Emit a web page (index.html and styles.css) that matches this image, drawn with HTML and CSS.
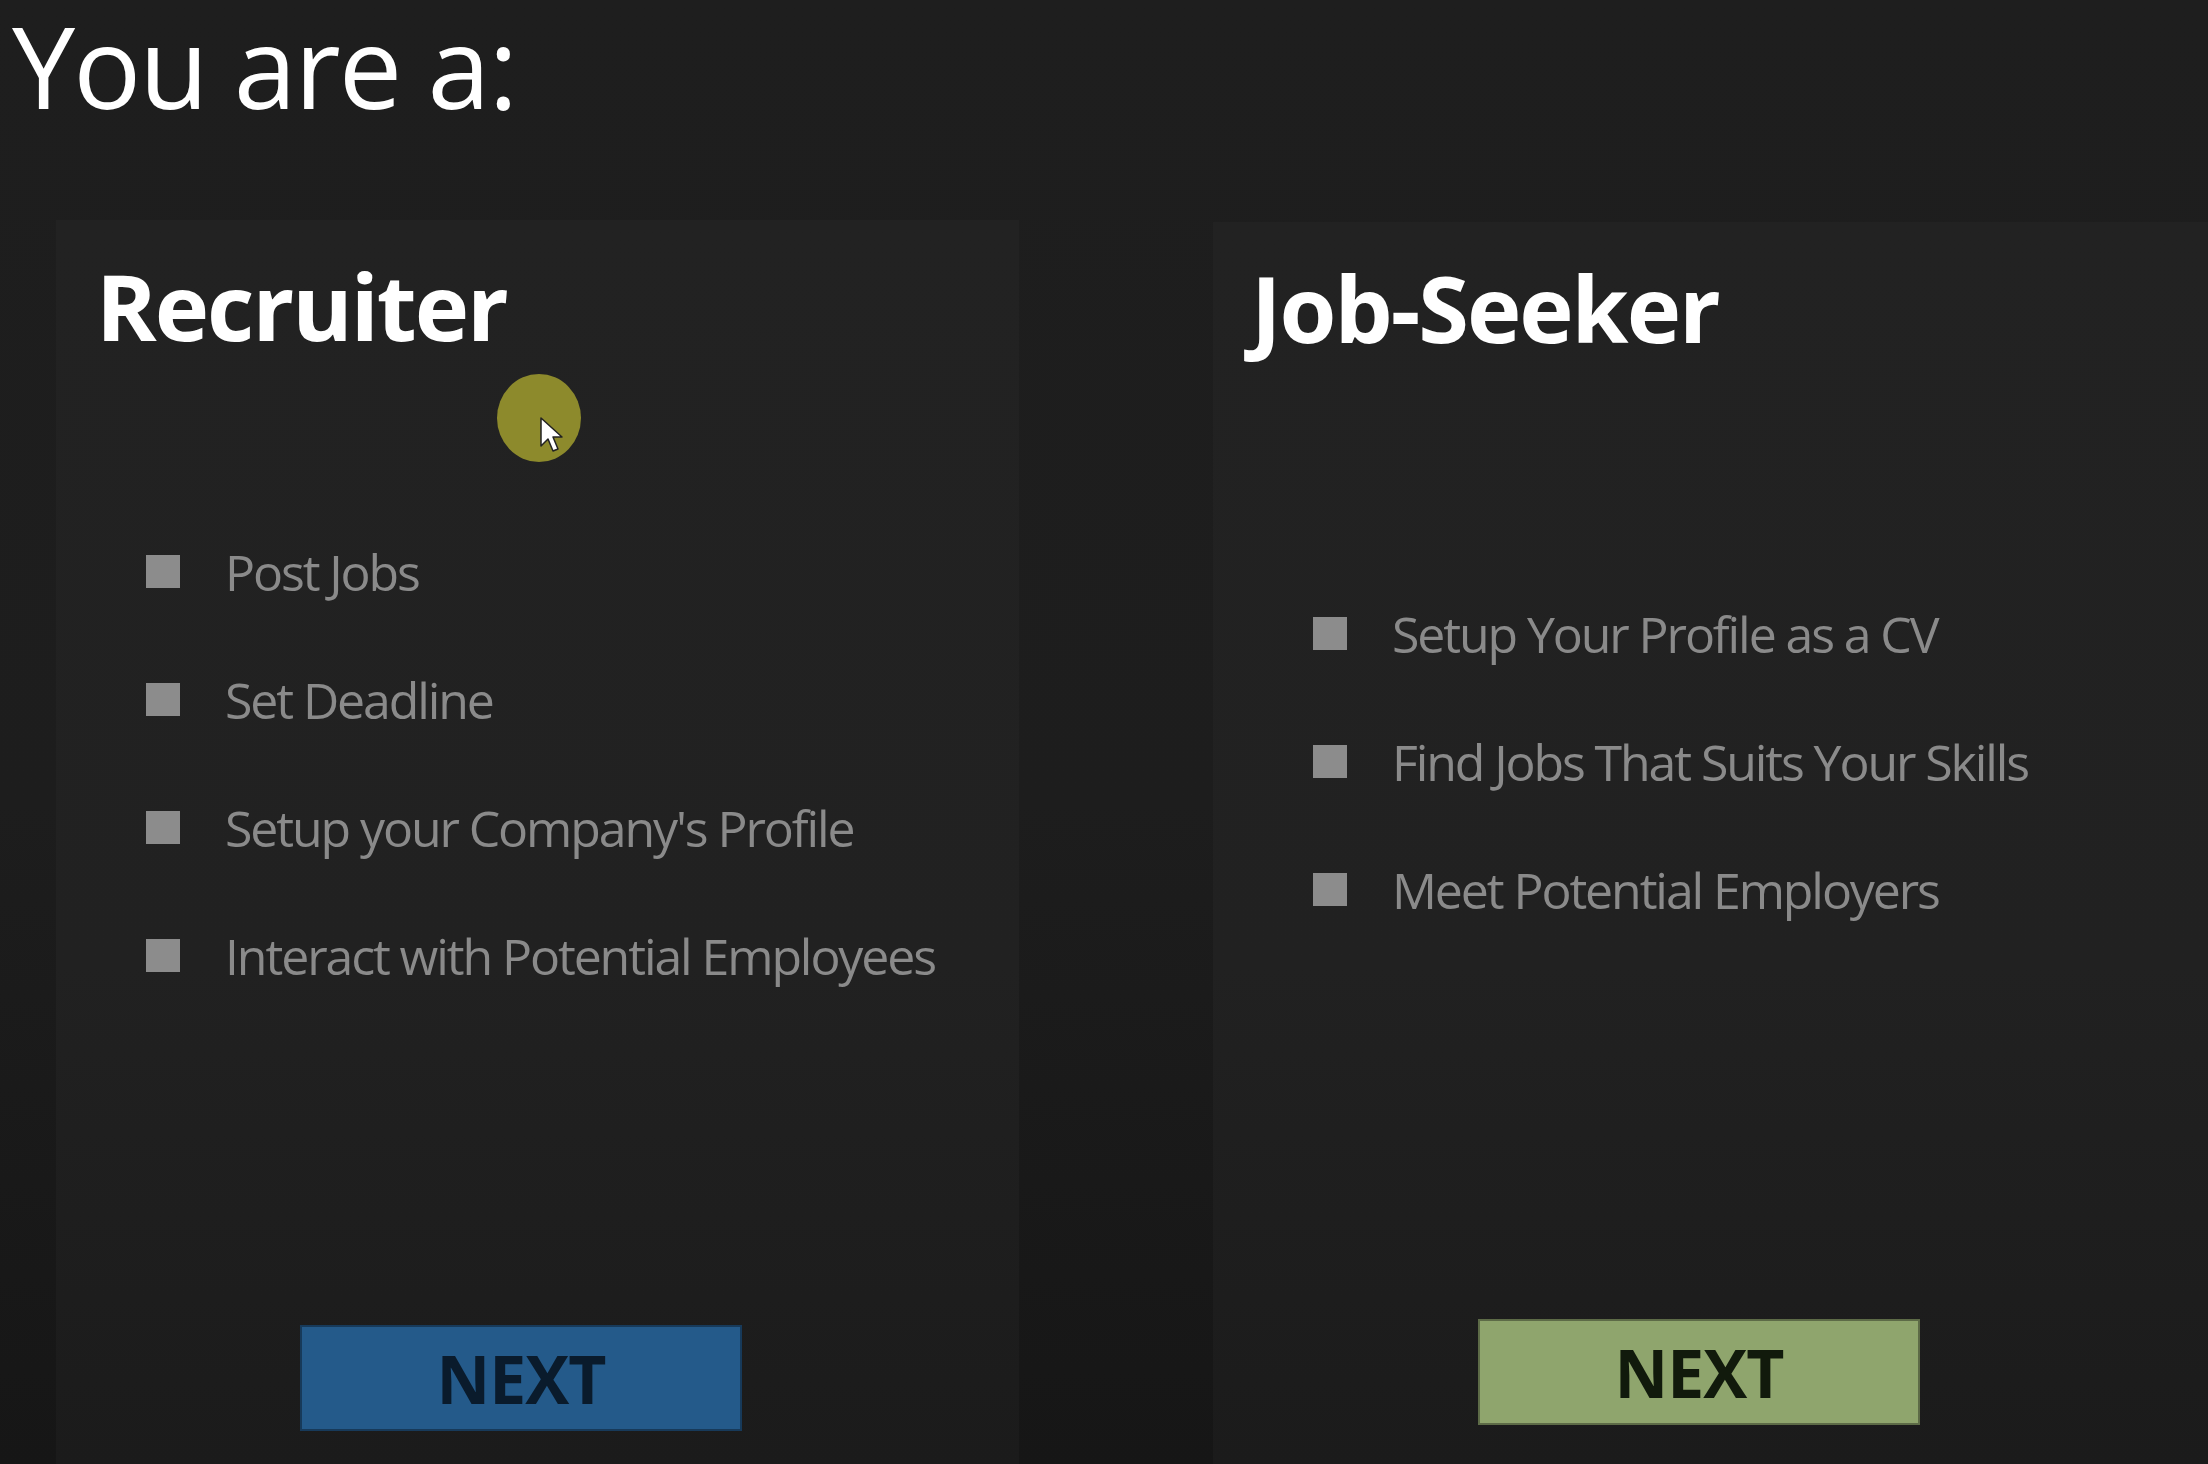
FILE: index.html
```html
<!DOCTYPE html>
<html lang="en">
<head>
<meta charset="utf-8">
<title>You are a:</title>
<link rel="stylesheet" href="styles.css">
</head>
<body>
<div class="page">
  <h1 class="heading">You are a:</h1>
  <div class="cards">
    <section class="card card-left">
      <h2 class="card-title">Recruiter</h2>
      <div class="list-area">
        <ul class="features">
          <li><span class="bullet"></span>Post Jobs</li>
          <li><span class="bullet"></span>Set Deadline</li>
          <li><span class="bullet"></span>Setup your Company's Profile</li>
          <li><span class="bullet"></span>Interact with Potential Employees</li>
        </ul>
      </div>
      <div class="actions">
        <button class="btn btn-blue">NEXT</button>
      </div>
    </section>
    <section class="card card-right">
      <h2 class="card-title">Job-Seeker</h2>
      <div class="list-area">
        <ul class="features">
          <li><span class="bullet"></span>Setup Your Profile as a CV</li>
          <li><span class="bullet"></span>Find Jobs That Suits Your Skills</li>
          <li><span class="bullet"></span>Meet Potential Employers</li>
        </ul>
      </div>
      <div class="actions">
        <button class="btn btn-green">NEXT</button>
      </div>
    </section>
  </div>
  <div class="cursor">
    <svg class="pointer" width="26" height="40" viewBox="0 0 26 40">
      <path d="M2 2 L2 30 L9 23 L14 35 L19 33 L14 21 L23 21 Z" fill="#ffffff" stroke="#222" stroke-width="1.5" stroke-linejoin="round"/>
    </svg>
  </div>
</div>
</body>
</html>
```
FILE: styles.css
```css
* { box-sizing: border-box; }
html, body { margin: 0; padding: 0; }
body {
  width: 2208px;
  height: 1464px;
  overflow: hidden;
  background: linear-gradient(180deg, #1e1e1e 0%, #1d1d1d 55%, #161616 100%);
  font-family: "Open Sans", "Noto Sans", sans-serif;
}
.page {
  position: relative;
  height: 1464px;
  display: flex;
  flex-direction: column;
}
.heading {
  margin: 0;
  padding: 0 0 0 12px;
  font-weight: 400;
  font-size: 113px;
  line-height: 130px;
  color: #ffffff;
  letter-spacing: -2px;
  height: 220px;
}
.cards {
  flex: 1;
  display: flex;
  gap: 194px;
  padding-left: 56px;
}
.card {
  display: flex;
  flex-direction: column;
  background: linear-gradient(180deg, #222222 0%, #212121 60%, #1b1b1b 100%);
  padding-bottom: 33px;
}
.card-left { width: 963px; }
.card-right { flex: 1; margin-top: 2px; padding-bottom: 39px; }
.card-title {
  margin: 0;
  font-weight: 700;
  font-size: 92px;
  line-height: 1;
  color: #ffffff;
  letter-spacing: -2px;
  padding-top: 40px;
}
.card-left .card-title { padding-left: 40px; }
.card-right .card-title { padding-left: 38px; }
.list-area {
  flex: 1;
  display: flex;
  flex-direction: column;
  justify-content: center;
  padding-bottom: 150px;
}
.features {
  list-style: none;
  margin: 0;
  padding: 0;
  display: flex;
  flex-direction: column;
  gap: 56px;
}
.card-left .features { padding-left: 90px; }
.card-right .features { padding-left: 100px; }
.features li {
  display: flex;
  align-items: center;
  height: 72px;
  font-size: 50px;
  color: #8a8a8a;
  letter-spacing: -2.1px;
  white-space: nowrap;
}
.bullet {
  width: 34px;
  height: 33px;
  background: #8c8c8c;
  margin-right: 45px;
  flex: none;
}
.actions {
  display: flex;
  height: 106px;
}
.card-left .actions { padding-left: 244px; }
.card-right .actions { padding-left: 265px; }
.btn {
  width: 442px;
  height: 106px;
  border: 2px solid rgba(0,0,0,0.35);
  font-family: "Open Sans", "Noto Sans", sans-serif;
  font-weight: 700;
  font-size: 66px;
  line-height: 1;
  padding: 0;
  letter-spacing: -1px;
}
.btn-blue { background: #245a8a; color: #0a1b2c; }
.btn-green { background: #8fa56d; color: #111a0c; }
.cursor {
  position: absolute;
  left: 497px;
  top: 374px;
  width: 84px;
  height: 88px;
  border-radius: 50%;
  background: #8d8a2c;
}
.pointer {
  position: absolute;
  left: 42px;
  top: 42px;
}
```
